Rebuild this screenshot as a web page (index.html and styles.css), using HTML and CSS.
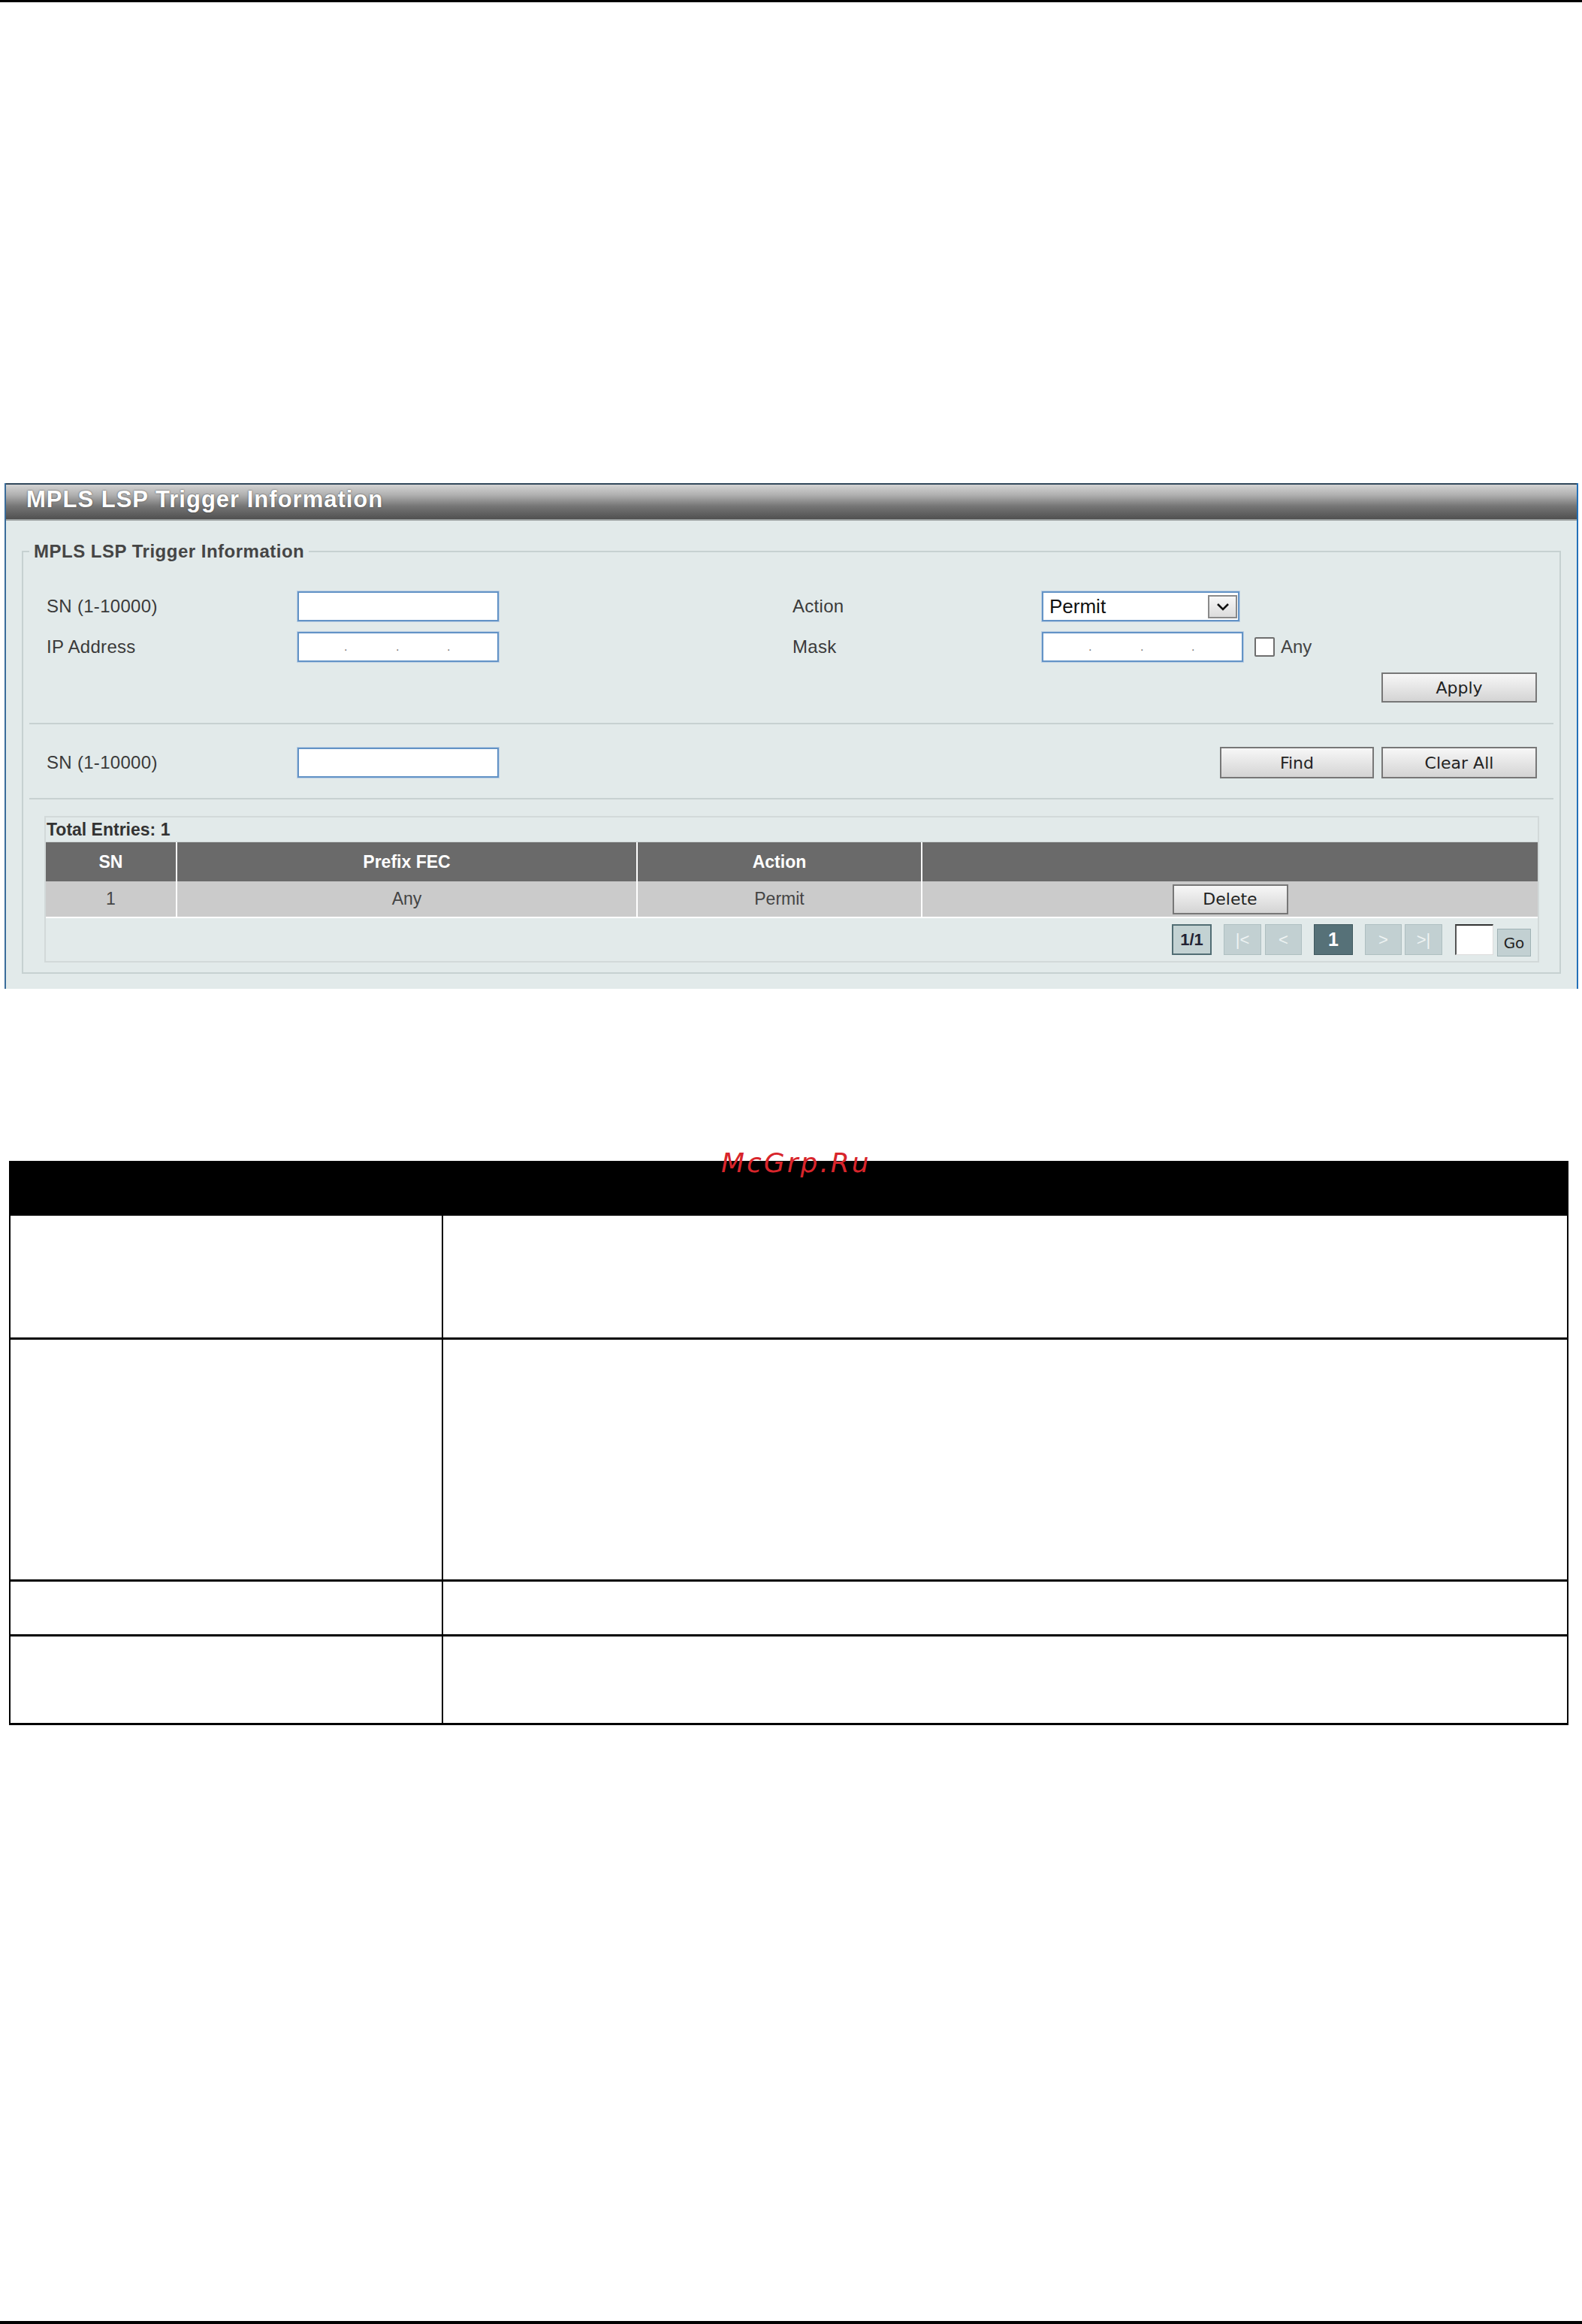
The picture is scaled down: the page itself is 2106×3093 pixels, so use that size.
FILE: index.html
```html
<!DOCTYPE html>
<html>
<head>
<meta charset="utf-8">
<title>MPLS LSP Trigger Information</title>
<link rel="stylesheet" href="styles.css">
</head>
<body>
<div class="page">
  <div class="rule-top"></div>

  <section class="panel">
    <div class="panel-head"><h1 class="panel-title">MPLS LSP Trigger Information</h1></div>
    <div class="panel-body">
      <fieldset class="group">
        <legend class="group-legend">MPLS LSP Trigger Information</legend>

        <div class="form">
          <div class="form-row">
            <span class="lbl">SN (1-10000)</span>
            <div class="fld"><div class="txt"></div></div>
            <span class="lbl lbl-r">Action</span>
            <div class="fld">
              <div class="select">
                <span class="select-val">Permit</span>
                <span class="select-btn"><svg width="20" height="11" viewBox="0 0 20 11"><path d="M3 2 L10 9 L17 2" fill="none" stroke="#111" stroke-width="2.6"/></svg></span>
              </div>
            </div>
          </div>
          <div class="form-row">
            <span class="lbl">IP Address</span>
            <div class="fld"><div class="txt ip"><span class="dot">.</span><span class="dot dot-2">.</span><span class="dot dot-3">.</span></div></div>
            <span class="lbl lbl-r">Mask</span>
            <div class="fld">
              <div class="txt ip"><span class="dot">.</span><span class="dot dot-2">.</span><span class="dot dot-3">.</span></div>
              <span class="chk"></span><span class="chk-lbl">Any</span>
            </div>
          </div>
          <div class="btn-row"><button class="btn">Apply</button></div>
        </div>

        <div class="sep"></div>

        <div class="form-row find-row">
          <span class="lbl">SN (1-10000)</span>
          <div class="fld"><div class="txt"></div></div>
          <div class="btns"><button class="btn btn-find">Find</button><button class="btn">Clear All</button></div>
        </div>

        <div class="sep sep-2"></div>

        <div class="grid-box">
          <div class="total">Total Entries: 1</div>
          <table class="data">
            <colgroup><col class="c-sn"><col class="c-fec"><col class="c-act"><col class="c-op"></colgroup>
            <thead>
              <tr><th>SN</th><th>Prefix FEC</th><th>Action</th><th class="last"></th></tr>
            </thead>
            <tbody>
              <tr><td>1</td><td>Any</td><td>Permit</td><td class="last"><button class="btn btn-del">Delete</button></td></tr>
            </tbody>
          </table>
          <div class="pager">
            <span class="pg-count">1/1</span>
            <span class="pg-nav pg-first">|&lt;</span>
            <span class="pg-nav pg-prev">&lt;</span>
            <span class="pg-cur">1</span>
            <span class="pg-nav pg-next">&gt;</span>
            <span class="pg-nav pg-last">&gt;|</span>
            <span class="pg-input"></span>
            <span class="pg-go">Go</span>
          </div>
        </div>
      </fieldset>
    </div>
  </section>

  <div class="watermark">McGrp.Ru</div>

  <div class="doc">
    <div class="doc-head"></div>
    <div class="doc-row r1"><div class="doc-c1"></div><div class="doc-c2"></div></div>
    <div class="doc-row r2"><div class="doc-c1"></div><div class="doc-c2"></div></div>
    <div class="doc-row r3"><div class="doc-c1"></div><div class="doc-c2"></div></div>
    <div class="doc-row r4"><div class="doc-c1"></div><div class="doc-c2"></div></div>
  </div>

  <div class="rule-bottom"></div>
</div>
</body>
</html>
```

FILE: styles.css
```css
* { box-sizing: border-box; }
html, body { margin: 0; padding: 0; background: #fff; }
body { font-family: "Liberation Sans", Arial, sans-serif; color: #333; }

.page {
  position: relative;
  width: 2106px;
  min-height: 3093px;
  display: flex;
  flex-direction: column;
}
.rule-top { flex: none; height: 3px; background: #000; }
.rule-bottom { flex: none; margin-top: auto; height: 4px; background: #000; }

/* ---------- panel ---------- */
.panel {
  flex: none;
  margin: 640px 0 0 6px;
  width: 2095px;
  border-left: 2px solid #3a6c9a;
  border-right: 2px solid #2370b8;
  background: #e2eaea;
}
.panel-head {
  height: 50px;
  border-top: 2px solid #31485b;
  border-bottom: 2px solid #9ea3a3;
  background: linear-gradient(#d4d4d4 0%, #b0b0b0 30%, #767676 62%, #505050 100%);
  display: flex;
  align-items: center;
  padding: 0 0 6px 27px;
}
.panel-title {
  margin: 0;
  font-size: 31px;
  line-height: 36px;
  font-weight: bold;
  letter-spacing: 1px;
  color: #fff;
  text-shadow: 0 0 2px #3a3a3a;
}
.panel-body { padding: 27px 21px 20px 21px; }

.group {
  margin: 0;
  min-width: 0;
  border: 2px solid #c6d1d1;
  padding: 0 8px 13px 8px;
}
.group-legend {
  padding: 0 6px;
  font-size: 24px;
  line-height: 28px;
  font-weight: bold;
  letter-spacing: 0.5px;
  color: #454545;
}

/* ---------- form ---------- */
.form { padding-top: 39px; }
.form-row {
  display: flex;
  align-items: center;
  height: 40px;
  padding-left: 23px;
}
.form-row + .form-row { margin-top: 14px; }
.lbl {
  flex: none;
  width: 334px;
  font-size: 24px;
  letter-spacing: 0.3px;
  color: #3a3a3a;
}
.lbl-r { width: 332px; }
.fld { flex: none; width: 659px; display: flex; align-items: center; }

.txt {
  width: 268px;
  height: 40px;
  background: #fff;
  border: 2px solid #6393c6;
  box-shadow: 0 0 0 1px #bcd0e4;
}
.ip { display: flex; align-items: flex-start; padding-left: 60px; }
.dot {
  width: 4px;
  margin-top: 10px;
  font-size: 16px;
  line-height: 16px;
  text-align: center;
  color: #777;
}
.dot-2 { margin-left: 65px; }
.dot-3 { margin-left: 64px; }

.select {
  width: 263px;
  height: 40px;
  background: #fff;
  border: 2px solid #6393c6;
  box-shadow: 0 0 0 1px #bcd0e4;
  display: flex;
  align-items: center;
  padding: 0 1px 0 8px;
}
.select-val { font-size: 26px; color: #111; }
.select-btn {
  margin-left: auto;
  width: 39px;
  height: 31px;
  border: 2px solid #8a8a8a;
  background: linear-gradient(#f7f7f7, #dcdcdc);
  display: flex;
  align-items: center;
  justify-content: center;
}

.chk {
  margin-left: 15px;
  width: 27px;
  height: 26px;
  background: #fff;
  border: 2px solid #6e6e6e;
  border-radius: 2px;
}
.chk-lbl { margin-left: 8px; font-size: 24px; color: #444; }

.btn-row {
  display: flex;
  justify-content: flex-end;
  margin-top: 14px;
  padding-right: 22px;
}
.btn {
  flex: none;
  width: 207px;
  height: 40px;
  padding: 0;
  font-family: "DejaVu Sans", Verdana, sans-serif;
  font-size: 22px;
  color: #222;
  border: 2px solid #777;
  background: linear-gradient(#f7f7f7, #d4d4d4);
}
.sep { height: 2px; background: #c7d1d1; margin-top: 27px; }
.sep-2 { margin-top: 26px; }

.find-row { margin-top: 30px; height: 42px; }
.btns { margin-left: auto; display: flex; gap: 10px; padding-right: 22px; }
.find-row .btn { height: 42px; }
.btn-find { width: 205px; }

/* ---------- grid ---------- */
.grid-box {
  margin: 22px 19px 0 20px;
  border: 2px solid #d2d9d9;
}
.total {
  height: 33px;
  border-bottom: 1px solid #cfd7d7;
  padding-left: 1px;
  font-size: 23px;
  line-height: 32px;
  font-weight: bold;
  color: #333;
}
.data { width: 100%; border-collapse: collapse; table-layout: fixed; }
.c-sn { width: 174px; }
.c-fec { width: 613px; }
.c-act { width: 379px; }
.data th {
  height: 52px;
  padding: 0;
  background: #6a6a6a;
  color: #fff;
  font-size: 23px;
  font-weight: bold;
  border-right: 2px solid #fff;
}
.data td {
  height: 48px;
  padding: 0;
  background: #cbcbcb;
  color: #444;
  font-size: 23px;
  text-align: center;
  border-right: 2px solid #fff;
  border-bottom: 2px solid #fff;
}
.data .last { border-right: none; }
.btn-del { width: 154px; height: 40px; vertical-align: middle; }

.pager {
  height: 57px;
  display: flex;
  align-items: center;
  justify-content: flex-end;
  padding-right: 9px;
}
.pager > span {
  flex: none;
  height: 41px;
  display: flex;
  align-items: center;
  justify-content: center;
}
.pg-count {
  width: 53px;
  background: #c3d2d3;
  border: 2px solid #516d74;
  font-size: 22px;
  font-weight: bold;
  color: #223;
}
.pg-nav {
  width: 50px;
  background: #c2d0d2;
  border: 1px solid #aebfc1;
  font-size: 22px;
  color: #eef3f3;
}
.pg-first { margin-left: 16px; }
.pg-prev { width: 49px; margin-left: 5px; }
.pg-cur {
  width: 52px;
  margin-left: 16px;
  background: #567178;
  border: 1px solid #3f585e;
  color: #fff;
  font-size: 25px;
  font-weight: bold;
}
.pg-next { width: 49px; margin-left: 16px; }
.pg-last { margin-left: 4px; }
.pg-input {
  width: 51px;
  margin-left: 17px;
  background: #fff;
  border-top: 2px solid #333;
  border-left: 2px solid #555;
  border-right: 1px solid #ddd;
  border-bottom: 1px solid #ddd;
}
.pager > .pg-go {
  width: 45px;
  height: 37px;
  margin-left: 5px;
  align-self: flex-end;
  margin-bottom: 6px;
  background: #c2d0d2;
  border: 1px solid #9fb2b5;
  font-family: "DejaVu Sans", Verdana, sans-serif;
  font-size: 20px;
  color: #222;
}

/* ---------- watermark ---------- */
.watermark {
  position: absolute;
  left: 960px;
  top: 1528px;
  z-index: 2;
  font-family: "DejaVu Sans", sans-serif;
  font-style: italic;
  font-size: 36px;
  line-height: 40px;
  letter-spacing: 3px;
  color: #d8252b;
}

/* ---------- document table ---------- */
.doc { flex: none; margin: 229px 0 0 12px; width: 2076px; }
.doc-head { height: 73px; background: #000; }
.doc-row {
  display: grid;
  grid-template-columns: 574px 1fr;
  border-left: 2px solid #000;
  border-right: 2px solid #000;
  border-bottom: 3px solid #000;
}
.doc-c2 { border-left: 2px solid #000; }
.r1 { height: 165px; }
.r2 { height: 322px; }
.r3 { height: 73px; }
.r4 { height: 118px; }
```
